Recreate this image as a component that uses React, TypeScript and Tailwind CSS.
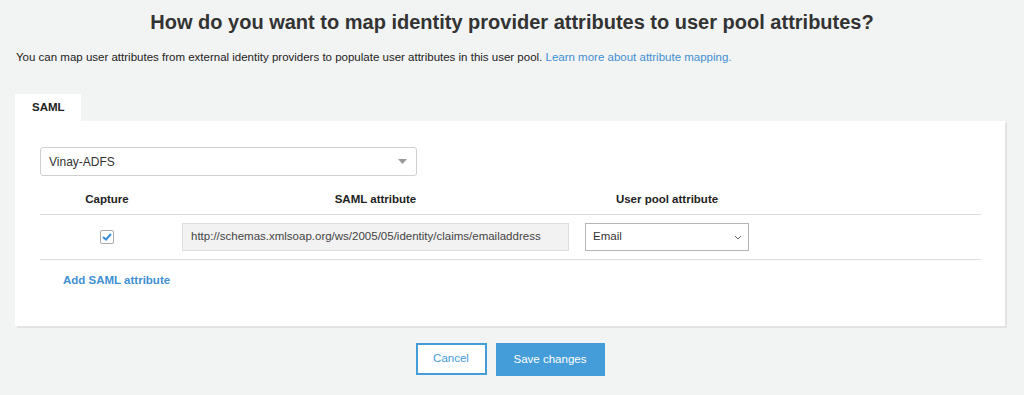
import React from "react";

const FONT = { fontFamily: '"Liberation Sans", Arial, sans-serif' };

function Caret() {
	return (
		<svg width="9" height="5" viewBox="0 0 9 5" className="shrink-0">
			<path d="M0 0 L9 0 L4.5 5 Z" fill="#999" />
		</svg>
	);
}

function Chevron() {
	return (
		<svg width="8" height="5" viewBox="0 0 8 5" className="shrink-0">
			<path d="M1 1 L4 4 L7 1" fill="none" stroke="#666" strokeWidth="1" />
		</svg>
	);
}

export default function App() {
	return (
		<div className="min-h-[395px] w-[1024px] bg-[#f2f3f3] text-[#333]" style={FONT}>
			<h1 className="pt-[10px] text-center text-[20px] font-bold leading-[24px] text-[#333]">
				How do you want to map identity provider attributes to user pool attributes?
			</h1>

			<p className="mt-[16px] pl-[16px] text-[11.5px] leading-[14px] text-[#222]">
				You can map user attributes from external identity providers to populate user attributes in this user pool.{" "}
				<a className="text-[#3f8fd2]">Learn more about attribute mapping.</a>
			</p>

			<div className="mx-[15px] mt-[30px] w-[990px]">
				<div className="flex h-[27px] w-[66px] items-center bg-white pl-[17px] text-[11.5px] font-bold text-[#222]">
					SAML
				</div>

				<div className="h-[205px] bg-white px-[25px] pt-[26px] shadow-[2px_2px_0_0_#e3e3e3]">
					<div className="flex h-[29px] w-[377px] items-center justify-between rounded-[3px] border border-[#cfcfcf] pl-[8px] pr-[9px] text-[12px] text-[#333]">
						<span>Vinay-ADFS</span>
						<Caret />
					</div>

					<div className="mt-[10px] w-[941px] text-[11.5px]">
						<div className="flex h-[29px] items-center border-b border-[#dcdcdc] font-bold text-[#222]">
							<div className="w-[134px] text-center">Capture</div>
							<div className="ml-[8px] w-[387px] text-center">SAML attribute</div>
							<div className="ml-[16px] w-[164px] text-center">User pool attribute</div>
						</div>

						<div className="flex h-[45px] items-center border-b border-[#dcdcdc]">
							<div className="flex w-[134px] justify-center">
								<div className="flex h-[14px] w-[14px] items-center justify-center rounded-[2px] border border-[#a9a9a9] bg-white">
									<svg width="10" height="8" viewBox="0 0 10 8">
										<path d="M1 4 L4 6.5 L9 1" fill="none" stroke="#3a8fd6" strokeWidth="2" />
									</svg>
								</div>
							</div>
							<div className="ml-[8px] flex h-[28px] w-[387px] items-center border border-[#dedede] bg-[#f2f2f2] pl-[8px] text-[11.5px] text-[#444]">
								http://schemas.xmlsoap.org/ws/2005/05/identity/claims/emailaddress
							</div>
							<div className="ml-[16px] flex h-[28px] w-[164px] items-center justify-between border border-[#b5b5b5] bg-white pl-[7px] pr-[6px] text-[11.5px] text-[#333]">
								<span>Email</span>
								<Chevron />
							</div>
						</div>

						<div className="pl-[23px] pt-[12px] text-[11.5px] font-bold text-[#3f8fd2]">Add SAML attribute</div>
					</div>
				</div>
			</div>

			<div className="mt-[17px] flex justify-center gap-[9px]">
				<button className="ml-[-4px] h-[32px] w-[71px] border-2 border-[#449cd8] bg-white text-[11.5px] text-[#449cd8]">
					Cancel
				</button>
				<button className="h-[33px] w-[109px] bg-[#449cd8] text-[11.5px] text-white">Save changes</button>
			</div>
		</div>
	);
}
